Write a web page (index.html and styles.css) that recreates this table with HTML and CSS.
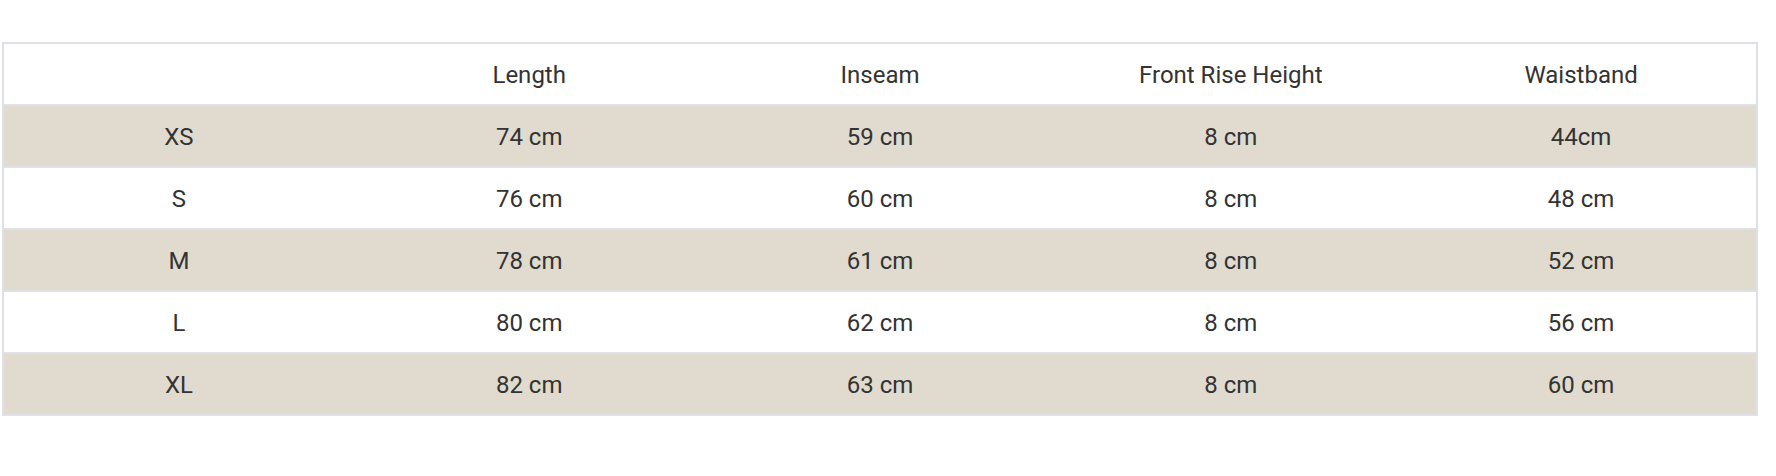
FILE: index.html
```html
<!DOCTYPE html>
<html lang="en">
<head>
<meta charset="utf-8">
<title>Size chart</title>
<link rel="stylesheet" href="styles.css">
</head>
<body>
<div class="wrap">
<table class="size-table">
<thead>
<tr><th></th><th>Length</th><th>Inseam</th><th>Front Rise Height</th><th>Waistband</th></tr>
</thead>
<tbody>
<tr class="alt"><td>XS</td><td>74 cm</td><td>59 cm</td><td>8 cm</td><td>44cm</td></tr>
<tr><td>S</td><td>76 cm</td><td>60 cm</td><td>8 cm</td><td>48 cm</td></tr>
<tr class="alt"><td>M</td><td>78 cm</td><td>61 cm</td><td>8 cm</td><td>52 cm</td></tr>
<tr><td>L</td><td>80 cm</td><td>62 cm</td><td>8 cm</td><td>56 cm</td></tr>
<tr class="alt"><td>XL</td><td>82 cm</td><td>63 cm</td><td>8 cm</td><td>60 cm</td></tr>
</tbody>
</table>
</div>
</body>
</html>
```
FILE: styles.css
```css
html, body {
  margin: 0;
  padding: 0;
  background: #ffffff;
}
.wrap {
  padding: 42px 0 0 2px;
  width: 1756px;
}
.size-table {
  width: 1756px;
  border-collapse: collapse;
  table-layout: fixed;
  border: 2px solid #dee2e6;
  font-family: Roboto, "Liberation Sans", sans-serif;
  font-size: 24px;
  color: #333333;
}
.size-table th,
.size-table td {
  height: 59px;
  padding: 1px 0 0;
  text-align: center;
  vertical-align: middle;
  font-weight: 400;
}
.size-table tbody tr {
  border-top: 2px solid #dee2e6;
}
.size-table tr.alt {
  background: #e0dbce;
}
```
